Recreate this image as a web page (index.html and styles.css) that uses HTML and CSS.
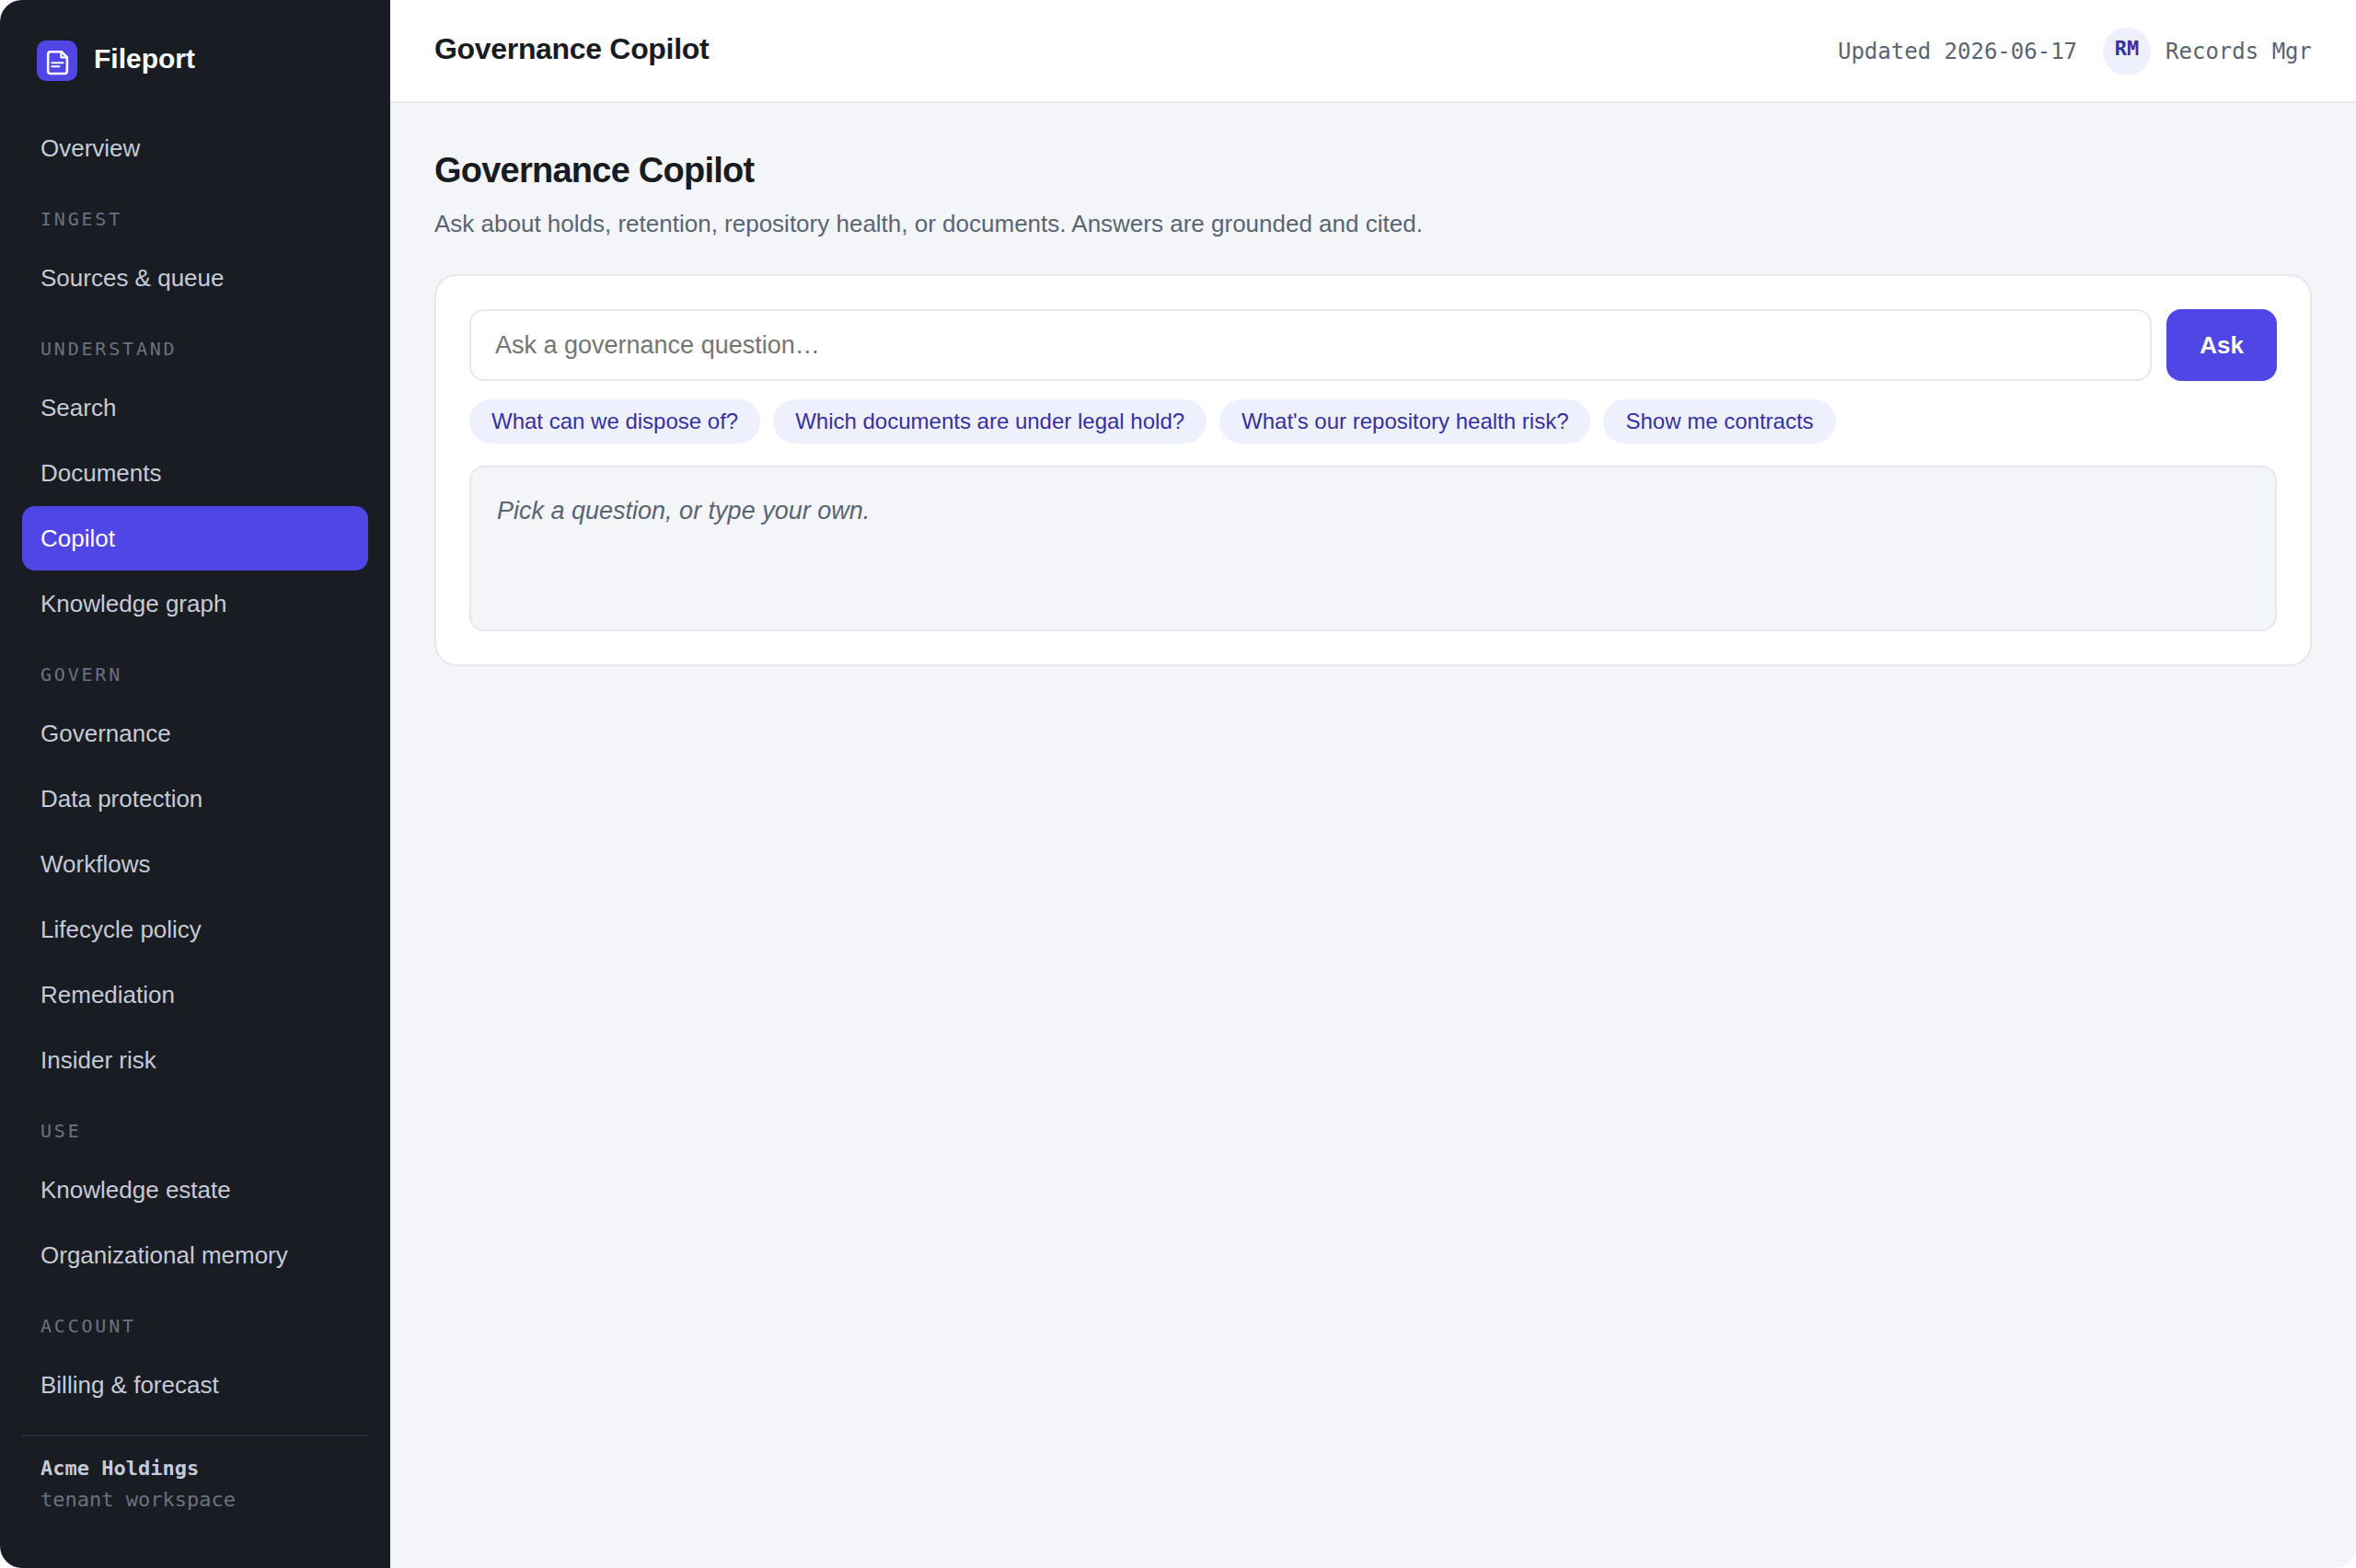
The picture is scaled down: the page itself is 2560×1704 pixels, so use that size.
FILE: index.html
```html
<!DOCTYPE html>
<html lang="en">
<head>
    <meta charset="UTF-8">
    <meta name="viewport" content="width=device-width, initial-scale=1.0">
    <title>Fileport - Governance Copilot</title>
    <link rel="stylesheet" href="styles.css">
</head>
<body>
    <div class="app">
        <aside class="sidebar">
            <div class="brand">
                <svg class="brand-icon" aria-hidden="true" viewBox="0 0 44 44" fill="none" stroke="#fff" stroke-linecap="round" stroke-linejoin="round">
                    <rect width="44" height="44" rx="10" fill="#4f46e5" stroke="none"/>
                    <path stroke-width="2.6" d="M15 12.3h12l5.9 5.9v15a2.8 2.8 0 0 1-2.8 2.8H15a2.8 2.8 0 0 1-2.8-2.8V15.1a2.8 2.8 0 0 1 2.8-2.8Z"/>
                    <path stroke-width="2.2" d="M26.4 12.6v5.8h6"/>
                    <path stroke-width="2" d="M16.4 24.3h12.2M16.4 28.2h8"/>
                </svg>
                <span class="brand-name">Fileport</span>
            </div>

            <nav class="nav">
                <a href="#">Overview</a>
                <h2 class="nav-label">Ingest</h2>
                <a href="#">Sources &amp; queue</a>
                <h2 class="nav-label">Understand</h2>
                <a href="#">Search</a>
                <a href="#">Documents</a>
                <a href="#" class="active" aria-current="page">Copilot</a>
                <a href="#">Knowledge graph</a>
                <h2 class="nav-label">Govern</h2>
                <a href="#">Governance</a>
                <a href="#">Data protection</a>
                <a href="#">Workflows</a>
                <a href="#">Lifecycle policy</a>
                <a href="#">Remediation</a>
                <a href="#">Insider risk</a>
                <h2 class="nav-label">Use</h2>
                <a href="#">Knowledge estate</a>
                <a href="#">Organizational memory</a>
                <h2 class="nav-label">Account</h2>
                <a href="#">Billing &amp; forecast</a>
            </nav>

            <div class="tenant">
                <strong>Acme Holdings</strong>
                <span>tenant workspace</span>
            </div>
        </aside>

        <div class="main">
            <header class="topbar">
                <div class="topbar-title">Governance Copilot</div>
                <div class="topbar-meta">
                    <span>Updated 2026-06-17</span>
                    <div class="user">
                        <span class="avatar">RM</span>
                        <span>Records Mgr</span>
                    </div>
                </div>
            </header>

            <main class="content">
                <h1>Governance Copilot</h1>
                <p class="subtitle">Ask about holds, retention, repository health, or documents. Answers are grounded and cited.</p>

                <section class="card">
                    <form class="ask-form" id="ask-form">
                        <input type="text" id="question" class="ask-input" placeholder="Ask a governance question…" aria-label="Governance question">
                        <button type="submit" class="ask-button">Ask</button>
                    </form>
                    <div class="chips">
                        <button type="button" class="chip">What can we dispose of?</button>
                        <button type="button" class="chip">Which documents are under legal hold?</button>
                        <button type="button" class="chip">What's our repository health risk?</button>
                        <button type="button" class="chip">Show me contracts</button>
                    </div>
                    <div class="answer"><em>Pick a question, or type your own.</em></div>
                </section>
            </main>
        </div>
    </div>

    <script>
        const questionInput = document.getElementById('question');

        // Copy the chip text into the question box
        document.querySelectorAll('.chip').forEach(chip => {
            chip.addEventListener('click', () => {
                questionInput.value = chip.textContent;
                questionInput.focus();
            });
        });

        document.getElementById('ask-form').addEventListener('submit', (e) => {
            e.preventDefault();
        });
    </script>
</body>
</html>
```

FILE: styles.css
```css
* {
    box-sizing: border-box;
}

body {
    margin: 0;
    background-color: #fff;
    color: #181b22;
    font-family: "Liberation Sans", Arial, sans-serif;
    font-size: 26px;
}

h1, h2, p {
    margin: 0;
}

button, input {
    font-family: inherit;
}

.app {
    display: flex;
    min-height: 100vh;
    border-radius: 24px;
    overflow: hidden;
    background-color: #f3f5f9;
}

/* Sidebar */
.sidebar {
    flex: 0 0 424px;
    display: flex;
    flex-direction: column;
    padding: 44px 24px 24px;
    background-color: #191c23;
}

.brand {
    display: flex;
    gap: 18px;
    padding: 0 16px;
    margin-bottom: 38px;
}

.brand-icon {
    width: 44px;
    height: 44px;
}

.brand-name {
    color: #fff;
    font-size: 30px;
    font-weight: bold;
    line-height: 40px;
}

.nav {
    display: flex;
    flex-direction: column;
}

.nav a {
    padding: 16px 20px;
    margin-bottom: 1px;
    border-radius: 14px;
    color: #c5cad6;
    line-height: 38px;
    text-decoration: none;
}

.nav a.active {
    background-color: #4f46e5;
    color: #fff;
}

.nav-label {
    padding: 26px 20px 14px;
    color: #6b7280;
    font-family: "DejaVu Sans Mono", monospace;
    font-size: 20px;
    font-weight: normal;
    letter-spacing: 0.14em;
    line-height: 30px;
    text-transform: uppercase;
}

.tenant {
    display: flex;
    flex-direction: column;
    margin-top: 18px;
    padding: 18px 20px;
    border-top: 2px solid #2a2e3a;
    color: #6b7280;
    font-family: "DejaVu Sans Mono", monospace;
    font-size: 22px;
    line-height: 34px;
}

.tenant strong {
    color: #c5cad6;
}

/* Main column */
.main {
    flex: 1;
    min-width: 0;
}

.topbar {
    display: flex;
    justify-content: space-between;
    padding: 30px 48px 28px;
    border-bottom: 2px solid #e6e8ed;
    background-color: #fff;
}

.topbar-title {
    font-size: 32px;
    font-weight: bold;
    letter-spacing: -0.01em;
    line-height: 46px;
}

.topbar-meta {
    display: flex;
    align-items: center;
    gap: 28px;
    color: #5b6472;
    font-family: "DejaVu Sans Mono", monospace;
    font-size: 24px;
}

.user {
    display: flex;
    align-items: center;
    gap: 16px;
}

.avatar {
    width: 52px;
    height: 52px;
    border-radius: 50%;
    background-color: #eef0fe;
    color: #3730a3;
    font-size: 22px;
    font-weight: bold;
    line-height: 46px;
    text-align: center;
}

.content {
    padding: 47px 48px;
}

.content h1 {
    font-size: 38px;
    letter-spacing: -0.02em;
    line-height: 52px;
}

.subtitle {
    margin-top: 12px;
    margin-bottom: 35px;
    color: #5b6472;
    line-height: 40px;
}

/* Copilot card */
.card {
    padding: 36px;
    border: 2px solid #e6e8ed;
    border-radius: 24px;
    background-color: #fff;
}

.ask-form {
    display: flex;
    gap: 16px;
}

.ask-input {
    flex: 1;
    min-width: 0;
    height: 78px;
    padding: 0 26px;
    border: 2px solid #e6e8ed;
    border-radius: 16px;
    background-color: #fff;
    color: #181b22;
    font-size: 27px;
}

.ask-input::placeholder {
    color: #757575;
}

.ask-button {
    padding: 0 36px;
    border: none;
    border-radius: 16px;
    background-color: #4f46e5;
    color: #fff;
    font-size: 26px;
    font-weight: bold;
    cursor: pointer;
}

.chips {
    display: flex;
    flex-wrap: wrap;
    gap: 14px;
    margin: 20px 0 24px;
}

.chip {
    height: 48px;
    padding: 0 24px;
    border: none;
    border-radius: 24px;
    background-color: #eef0fe;
    color: #3730a3;
    font-size: 24px;
    cursor: pointer;
}

.answer {
    min-height: 180px;
    padding: 26px 28px;
    border: 2px solid #e6e8ed;
    border-radius: 16px;
    background-color: #f3f5f9;
    color: #5b6472;
    font-size: 27px;
    line-height: 42px;
}
```
